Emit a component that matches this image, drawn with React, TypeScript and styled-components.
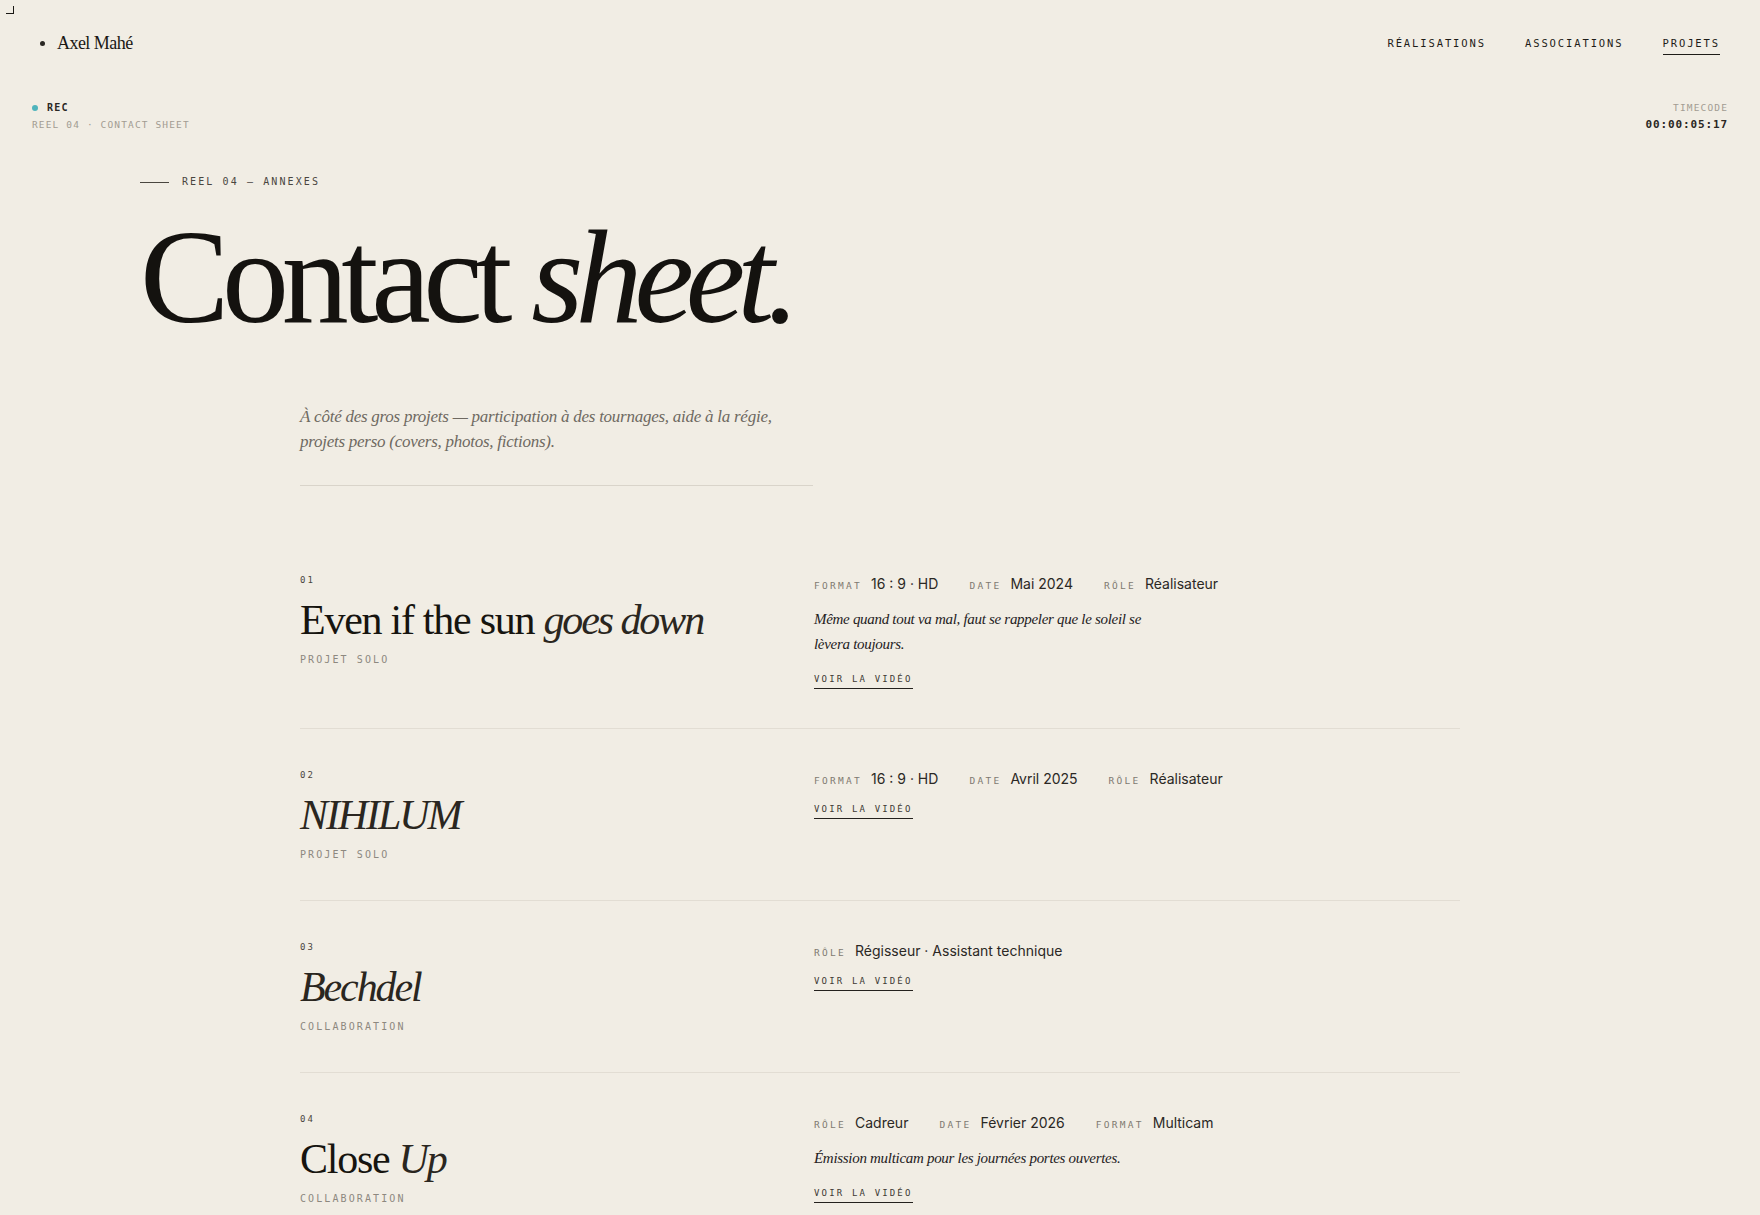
import React from 'react';
import styled, { createGlobalStyle } from 'styled-components';

const serif = `"Liberation Serif", "DejaVu Serif", serif`;
const mono = `"DejaVu Sans Mono", "Liberation Mono", monospace`;
const sans = `Inter, "Noto Sans", sans-serif`;

const GlobalStyle = createGlobalStyle`
  * { box-sizing: border-box; }
  html, body {
    margin: 0;
    padding: 0;
    background: #f1ede4;
    color: #1a1814;
  }
`;

const Page = styled.div`
  min-height: 1215px;
  background: #f1ede4;
  padding-bottom: 40px;
`;

const CornerMark = styled.span`
  position: fixed;
  top: 6px;
  left: 6px;
  width: 8px;
  height: 8px;
  border-right: 1.5px solid #1a1814;
  border-bottom: 1.5px solid #1a1814;
`;

const Header = styled.header`
  height: 86px;
  padding: 0 40px;
  display: flex;
  align-items: center;
  justify-content: space-between;
`;

const Brand = styled.a`
  display: flex;
  align-items: center;
  gap: 12px;
  font-family: ${serif};
  font-size: 18px;
  letter-spacing: -0.03em;
  color: #1a1814;
  text-decoration: none;
`;

const BrandDot = styled.span`
  width: 5px;
  height: 5px;
  border-radius: 50%;
  background: #2a2723;
`;

const Nav = styled.nav`
  display: flex;
  gap: 39px;
`;

const NavLink = styled.a<{ $active?: boolean }>`
  font-family: ${mono};
  font-size: 10.5px;
  letter-spacing: 0.18em;
  color: #1e1c18;
  text-decoration: none;
  padding: 6px 0 5px;
  border-bottom: 1.5px solid ${(p) => (p.$active ? '#1e1c18' : 'transparent')};
`;

const Hud = styled.div`
  padding: 15px 32px 0;
  display: flex;
  justify-content: space-between;
  align-items: flex-start;
`;

const HudBlock = styled.div<{ $align?: 'left' | 'right' }>`
  display: flex;
  flex-direction: column;
  gap: 3px;
  align-items: ${(p) => (p.$align === 'right' ? 'flex-end' : 'flex-start')};
`;

const RecLine = styled.div`
  display: flex;
  align-items: center;
  gap: 9px;
  font-family: ${mono};
  font-weight: 700;
  font-size: 10px;
  line-height: 14px;
  letter-spacing: 0.12em;
  color: #2a2723;
`;

const RecDot = styled.span`
  width: 6px;
  height: 6px;
  border-radius: 50%;
  background: #4fb4bc;
`;

const HudCaption = styled.div`
  font-family: ${mono};
  font-size: 9.5px;
  line-height: 14px;
  letter-spacing: 0.12em;
  color: #a29c92;
`;

const Timecode = styled.div`
  font-family: ${mono};
  font-weight: 700;
  font-size: 11px;
  line-height: 14px;
  letter-spacing: 0.08em;
  color: #2a2723;
`;

const Hero = styled.section`
  padding: 43px 0 0 140px;
`;

const Eyebrow = styled.div`
  display: flex;
  align-items: center;
  gap: 13px;
  font-family: ${mono};
  font-size: 10px;
  line-height: 14px;
  letter-spacing: 0.21em;
  color: #4a463f;
`;

const EyebrowRule = styled.span`
  width: 29px;
  height: 1px;
  background: #4a463f;
`;

const Title = styled.h1`
  margin: 21px 0 0;
  font-family: ${serif};
  font-weight: 400;
  font-size: 134px;
  line-height: 1;
  letter-spacing: -0.055em;
  color: #14120f;

  em {
    font-style: italic;
    letter-spacing: -0.06em;
  }
`;

const Intro = styled.p`
  width: 513px;
  margin: 60px 0 0 300px;
  padding-bottom: 31px;
  border-bottom: 1px solid #d9d4ca;
  font-family: ${serif};
  font-style: italic;
  font-size: 17px;
  line-height: 25px;
  letter-spacing: -0.015em;
  color: #6e6961;
`;

const List = styled.section`
  width: 1160px;
  margin: 48px 0 0 300px;
`;

const Row = styled.article<{ $last?: boolean }>`
  display: grid;
  grid-template-columns: 514px 1fr;
  padding: 40px 0 39px;
  border-bottom: 1px solid ${(p) => (p.$last ? 'transparent' : '#e2ddd3')};
`;

const LeftCol = styled.div`
  display: flex;
  flex-direction: column;
`;

const Index = styled.div`
  font-family: ${mono};
  font-size: 9px;
  line-height: 12px;
  letter-spacing: 0.22em;
  color: #4a463f;
`;

const ProjectTitle = styled.h2`
  margin: 10px 0 0;
  font-family: ${serif};
  font-weight: 400;
  font-size: 42px;
  line-height: 48px;
  letter-spacing: -0.03em;
  color: #16140f;

  em {
    font-style: italic;
    color: #2a2620;
    letter-spacing: -0.05em;
  }
`;

const Kind = styled.div`
  margin-top: 9px;
  font-family: ${mono};
  font-size: 10px;
  line-height: 13px;
  letter-spacing: 0.21em;
  color: #8d887f;
`;

const RightCol = styled.div`
  display: flex;
  flex-direction: column;
  align-items: flex-start;
  gap: 13px;
`;

const Meta = styled.dl`
  margin: 0;
  display: flex;
  align-items: baseline;
  gap: 31px;
`;

const MetaItem = styled.div`
  display: flex;
  align-items: baseline;
  gap: 9px;
`;

const MetaLabel = styled.dt`
  font-family: ${mono};
  font-size: 9.5px;
  letter-spacing: 0.24em;
  color: #7f7a71;
`;

const MetaValue = styled.dd`
  margin: 0;
  font-family: ${sans};
  font-size: 14px;
  line-height: 20px;
  color: #2b2824;
`;

const Description = styled.p`
  margin: 0 0 2px;
  max-width: 345px;
  font-family: ${serif};
  font-style: italic;
  font-size: 15px;
  line-height: 25px;
  letter-spacing: -0.02em;
  color: #24211d;
`;

const WatchLink = styled.a`
  font-family: ${mono};
  font-size: 9px;
  line-height: 14px;
  letter-spacing: 0.24em;
  color: #3e3a34;
  text-decoration: none;
  padding-bottom: 2px;
  border-bottom: 1px solid #24211d;
`;

type MetaEntry = { label: string; value: string };

type Project = {
  index: string;
  title: React.ReactNode;
  kind: string;
  meta: MetaEntry[];
  description?: string;
};

const projects: Project[] = [
  {
    index: '01',
    title: (
      <>
        Even if the sun <em>goes down</em>
      </>
    ),
    kind: 'PROJET SOLO',
    meta: [
      { label: 'FORMAT', value: '16 : 9 · HD' },
      { label: 'DATE', value: 'Mai 2024' },
      { label: 'RÔLE', value: 'Réalisateur' },
    ],
    description:
      'Même quand tout va mal, faut se rappeler que le soleil se lèvera toujours.',
  },
  {
    index: '02',
    title: <em>NIHILUM</em>,
    kind: 'PROJET SOLO',
    meta: [
      { label: 'FORMAT', value: '16 : 9 · HD' },
      { label: 'DATE', value: 'Avril 2025' },
      { label: 'RÔLE', value: 'Réalisateur' },
    ],
  },
  {
    index: '03',
    title: <em>Bechdel</em>,
    kind: 'COLLABORATION',
    meta: [{ label: 'RÔLE', value: 'Régisseur · Assistant technique' }],
  },
  {
    index: '04',
    title: (
      <>
        Close <em>Up</em>
      </>
    ),
    kind: 'COLLABORATION',
    meta: [
      { label: 'RÔLE', value: 'Cadreur' },
      { label: 'DATE', value: 'Février 2026' },
      { label: 'FORMAT', value: 'Multicam' },
    ],
    description: 'Émission multicam pour les journées portes ouvertes.',
  },
];

export default function App() {
  return (
    <>
      <GlobalStyle />
      <Page>
        <CornerMark />
        <Header>
          <Brand href="#">
            <BrandDot />
            Axel Mahé
          </Brand>
          <Nav>
            <NavLink href="#">RÉALISATIONS</NavLink>
            <NavLink href="#">ASSOCIATIONS</NavLink>
            <NavLink href="#" $active>
              PROJETS
            </NavLink>
          </Nav>
        </Header>

        <Hud>
          <HudBlock>
            <RecLine>
              <RecDot />
              REC
            </RecLine>
            <HudCaption>REEL 04 · CONTACT SHEET</HudCaption>
          </HudBlock>
          <HudBlock $align="right">
            <HudCaption>TIMECODE</HudCaption>
            <Timecode>00:00:05:17</Timecode>
          </HudBlock>
        </Hud>

        <Hero>
          <Eyebrow>
            <EyebrowRule />
            REEL 04 — ANNEXES
          </Eyebrow>
          <Title>
            Contact <em>sheet.</em>
          </Title>
        </Hero>

        <Intro>
          À côté des gros projets — participation à des tournages, aide à la régie,
          projets perso (covers, photos, fictions).
        </Intro>

        <List>
          {projects.map((p, i) => (
            <Row key={p.index} $last={i === projects.length - 1}>
              <LeftCol>
                <Index>{p.index}</Index>
                <ProjectTitle>{p.title}</ProjectTitle>
                <Kind>{p.kind}</Kind>
              </LeftCol>
              <RightCol>
                <Meta>
                  {p.meta.map((m) => (
                    <MetaItem key={m.label}>
                      <MetaLabel>{m.label}</MetaLabel>
                      <MetaValue>{m.value}</MetaValue>
                    </MetaItem>
                  ))}
                </Meta>
                {p.description && <Description>{p.description}</Description>}
                <WatchLink href="#">VOIR LA VIDÉO</WatchLink>
              </RightCol>
            </Row>
          ))}
        </List>
      </Page>
    </>
  );
}
